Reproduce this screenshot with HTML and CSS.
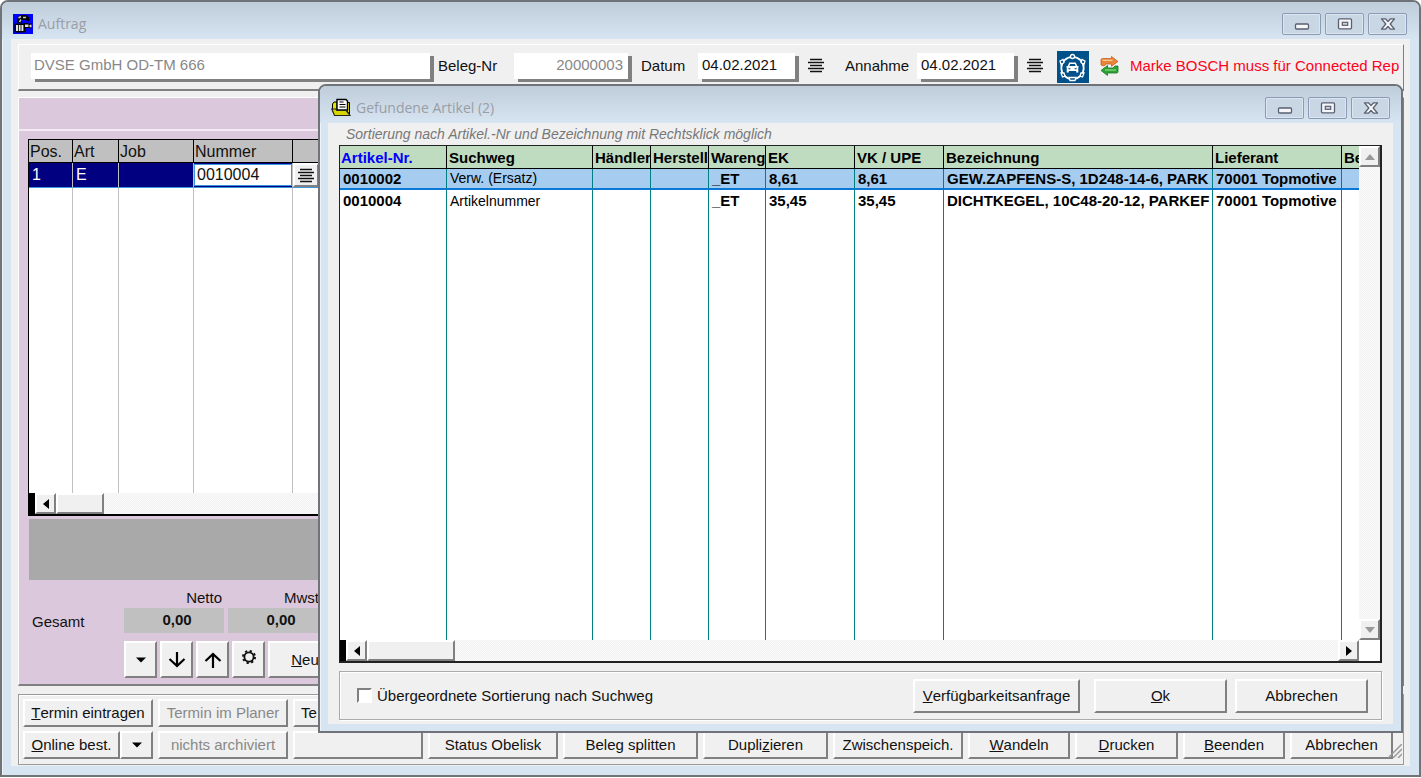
FILE: index.html
```html
<!DOCTYPE html>
<html lang="de">
<head>
<meta charset="utf-8">
<title>Auftrag</title>
<link rel="stylesheet" href="styles.css">
</head>
<body>
<svg class="defs" width="0" height="0" aria-hidden="true">
  <symbol id="lines" viewBox="0 0 16 15"><path d="M2 1.500h12M0 4.500h16M2 7.500h12M0 10.500h16M2 13.500h12" stroke="#111" stroke-width="1.600"/></symbol>
  <symbol id="min" viewBox="0 0 16 14"><rect x="1.500" y="7" width="13" height="5" rx="1" fill="#f4f6f9" stroke="#5a6070" stroke-width="1.300"/></symbol>
  <symbol id="max" viewBox="0 0 16 14"><rect x="1.500" y="1.800" width="13" height="10" rx="1" fill="#f4f6f9" stroke="#5a6070" stroke-width="1.300"/><rect x="5.300" y="5.300" width="5.400" height="3" fill="#c8d4e0" stroke="#5a6070" stroke-width="1.200"/></symbol>
  <symbol id="close" viewBox="0 0 16 14"><path d="M1.500 1.800h4L8 4.600l2.500-2.800h4L10.200 7l4.300 5.200h-4L8 9.400l-2.500 2.800h-4L5.800 7z" fill="#f4f6f9" stroke="#5a6070" stroke-width="1.300" stroke-linejoin="round"/></symbol>
  <symbol id="down" viewBox="0 0 10 6"><path d="M0 0.500h10L5 5.500z" fill="#000"/></symbol>
</svg>

<main class="window main-window">
  <header class="titlebar">
    <svg class="app-icon" viewBox="0 0 20 20" aria-hidden="true">
      <rect width="20" height="20" fill="#0000ff"/>
      <path d="M4 5.500L5.500 2.500 8 1h5l3 2 .5 3-1.500 1.500-2-1.500H9v3H4z" fill="#000"/>
      <path d="M5.500 4L8 2.500M8 5.500L6.500 8M10 3.500h3" stroke="#c8c8c8" stroke-width="1.500"/>
      <rect x="1.500" y="9.500" width="11" height="9" fill="#000"/>
      <path d="M3 11h2v6H3zM5.800 11h1.800v6H5.800zM8.400 11h2v6h-2z" fill="#e4e4e4"/>
      <path d="M11 9h4l1 1 3-1v6l-3-1h-5z" fill="#000"/>
      <path d="M12 10.500h3.500v2.500H12zM16.500 11l2-.5v3l-2-.5z" fill="#dcdcdc"/>
    </svg>
    <h1>Auftrag</h1>
    <div class="controls">
      <button type="button" aria-label="Minimieren"><svg><use href="#min"/></svg></button>
      <button type="button" aria-label="Maximieren"><svg><use href="#max"/></svg></button>
      <button type="button" aria-label="Schließen"><svg><use href="#close"/></svg></button>
    </div>
  </header>

  <div class="client">
    <section class="order-head">
      <input class="field customer muted" type="text" value="DVSE GmbH OD-TM 666" aria-label="Kunde">
      <label for="beleg">Beleg-Nr</label>
      <input class="field beleg muted" id="beleg" type="text" value="20000003">
      <label for="datum">Datum</label>
      <input class="field date" id="datum" type="text" value="04.02.2021">
      <button type="button" class="plain" aria-label="Datum wählen"><svg class="lines"><use href="#lines"/></svg></button>
      <label for="annahme">Annahme</label>
      <input class="field date" id="annahme" type="text" value="04.02.2021">
      <button type="button" class="plain" aria-label="Annahme wählen"><svg class="lines"><use href="#lines"/></svg></button>
      <button type="button" class="plain" aria-label="Fahrzeug">
        <svg class="car" viewBox="0 0 32 32">
          <rect width="32" height="32" fill="#00508a"/>
          <circle cx="15.500" cy="17" r="11.200" fill="none" stroke="#fff" stroke-width="1.800"/>
          <g fill="#00508a" stroke="#fff" stroke-width="1.300">
            <circle cx="15.500" cy="5.500" r="2"/><path d="M3 10l3-1.500 1 3-3 2zM28 10l-3-1.500-1 3 3 2zM4 22l3 0 1 3-2.500 1zM27 22l-3 0-1 3 2.500 1zM12 26.500h7l-1 3h-5z"/>
          </g>
          <path d="M9 15.500l1.700-.6 1.600-3.400h6.400l1.600 3.400 1.700.6-.8 1.200.2 4.800h-2.200V20h-7.400v1.500H9.600l.2-4.800zM13.200 12.900l-.9 2h6.400l-.9-2zM11.500 16.800v1.400h2v-.8zM19.500 16.800v1.400h-2v-.8z" fill="#fff" fill-rule="evenodd"/>
        </svg>
      </button>
      <button type="button" class="plain" aria-label="Synchronisieren">
        <svg class="sync" viewBox="0 0 19 20">
          <path d="M1 9V4q0-1.500 1.500-1.500h9V0.500l6.500 5-6.500 4.800V8H6L4 10z" fill="#e8853a" stroke="#c4601c" stroke-width=".8"/>
          <path d="M2.500 4.300h10" stroke="#f9c894" stroke-width="1.300"/>
          <path d="M18 10v5.500q0 1.500-1.500 1.500h-9v2.500L1 14.500l6.500-5V12H13l2-2z" fill="#2ea135" stroke="#167a20" stroke-width=".8"/>
          <path d="M5 14h11" stroke="#86d47c" stroke-width="1.300"/>
        </svg>
      </button>
      <p class="warning">Marke BOSCH muss für Connected Rep</p>
    </section>

    <section class="order-body">
      <div class="strip"></div>
      <div class="positions">
        <div class="list">
          <table class="pos-table">
            <colgroup><col class="c-pos"><col class="c-art"><col class="c-job"><col class="c-num"><col class="c-btn"><col></colgroup>
            <thead><tr><th>Pos.</th><th>Art</th><th>Job</th><th>Nummer</th><th></th><th></th></tr></thead>
            <tbody>
              <tr class="active"><td>1</td><td>E</td><td></td><td class="edit"><input type="text" value="0010004" aria-label="Nummer"></td><td class="pick"><button type="button" class="raised" aria-label="Artikel wählen"><svg class="lines"><use href="#lines"/></svg></button></td><td></td></tr>
              <tr class="filler"><td></td><td></td><td></td><td></td><td></td><td></td></tr>
            </tbody>
          </table>
          <div class="hscroll">
            <button type="button" class="raised" aria-label="Links"><svg class="tri-h" viewBox="0 0 6 10"><path d="M6 0v10L0 5z"/></svg></button>
            <span class="raised thumb short"></span>
          </div>
        </div>
        <div class="info"></div>
        <div class="totals">
          <span></span><span class="cap">Netto</span><span class="cap mw">Mwst</span>
          <span class="sum-label">Gesamt</span><output>0,00</output><output>0,00</output>
        </div>
        <div class="tools">
          <button type="button" class="raised" aria-label="Menü"><svg class="down"><use href="#down"/></svg></button>
          <button type="button" class="raised" aria-label="Nach unten"><svg class="arrow" viewBox="0 0 18 16"><path d="M9 0v14M1.500 7l7.500 7 7.500-7" fill="none" stroke="#000" stroke-width="2.200"/></svg></button>
          <button type="button" class="raised" aria-label="Nach oben"><svg class="arrow" viewBox="0 0 18 16"><path d="M9 16V2M1.500 9L9 2l7.500 7" fill="none" stroke="#000" stroke-width="2.200"/></svg></button>
          <button type="button" class="raised gear-button" aria-label="Einstellungen"><svg class="gear" viewBox="0 0 16 16"><circle cx="8" cy="8" r="4.600" fill="none" stroke="#111" stroke-width="1.800"/><circle cx="8" cy="8" r="6" fill="none" stroke="#111" stroke-width="2" stroke-dasharray="2.200 2.512"/></svg></button>
          <button type="button" class="raised new"><u>N</u>eu</button>
        </div>
      </div>
    </section>

    <footer class="actions">
      <button type="button" class="raised"><u>T</u>ermin eintragen</button>
      <button type="button" class="raised muted">Termin im Planer</button>
      <button type="button" class="raised start">Te</button>
      <div class="split">
        <button type="button" class="raised"><u>O</u>nline best.</button>
        <button type="button" class="raised" aria-label="Mehr"><svg class="down"><use href="#down"/></svg></button>
      </div>
      <button type="button" class="raised muted">nichts archiviert</button>
      <button type="button" class="raised" aria-label="Leer"></button>
      <button type="button" class="raised">Status Obelisk</button>
      <button type="button" class="raised">Beleg splitten</button>
      <button type="button" class="raised">Dupli<u>z</u>ieren</button>
      <button type="button" class="raised">Zwischenspeich.</button>
      <button type="button" class="raised"><u>W</u>andeln</button>
      <button type="button" class="raised"><u>D</u>rucken</button>
      <button type="button" class="raised"><u>B</u>eenden</button>
      <button type="button" class="raised">Abbrechen</button>
      <svg class="grip" viewBox="0 0 14 14" aria-hidden="true"><path d="M0 14L14 0M5 14l9-9M10 14l4-4" stroke="#999" stroke-width="1.500"/></svg>
    </footer>
  </div>
</main>

<section class="window dialog" role="dialog" aria-labelledby="dialog-title">
  <header class="titlebar">
    <svg class="app-icon" viewBox="0 0 20 20" aria-hidden="true">
      <path d="M1.500 13V6l1.500-2h3v9z" fill="#e4e400" stroke="#000"/>
      <path d="M16 4.500h2.500V16L16 13z" fill="#e4e400" stroke="#000"/>
      <path d="M6 12V1.500h9L16.500 3v9z" fill="#fff" stroke="#000" stroke-width="1.400"/>
      <path d="M8.500 4h4M8.500 6.500h6M8.500 9h6" stroke="#000" stroke-width="1.200"/>
      <path d="M0.800 11h4l1 1.500H15l4 5H3.500z" fill="#d6d600" stroke="#222" stroke-width="1.200"/>
    </svg>
    <h2 id="dialog-title">Gefundene Artikel (2)</h2>
    <div class="controls">
      <button type="button" aria-label="Minimieren"><svg><use href="#min"/></svg></button>
      <button type="button" aria-label="Maximieren"><svg><use href="#max"/></svg></button>
      <button type="button" aria-label="Schließen"><svg><use href="#close"/></svg></button>
    </div>
  </header>
  <div class="dialog-client">
    <p class="hint">Sortierung nach Artikel.-Nr und Bezeichnung mit Rechtsklick möglich</p>
    <div class="results">
      <table class="result-table">
        <colgroup><col class="r-nr"><col class="r-weg"><col class="r-s"><col class="r-s"><col class="r-m"><col class="r-ek"><col class="r-vk"><col><col class="r-lief"><col class="r-end"></colgroup>
        <thead><tr><th class="sorted">Artikel-Nr.</th><th>Suchweg</th><th>Händler</th><th>Herstell</th><th>Wareng</th><th>EK</th><th>VK / UPE</th><th>Bezeichnung</th><th>Lieferant</th><th>Be</th></tr></thead>
        <tbody>
          <tr class="selected"><td>0010002</td><td class="way">Verw. (Ersatz)</td><td></td><td></td><td>_ET</td><td>8,61</td><td>8,61</td><td>GEW.ZAPFENS-S, 1D248-14-6, PARK</td><td>70001 Topmotive</td><td></td></tr>
          <tr><td>0010004</td><td class="way">Artikelnummer</td><td></td><td></td><td>_ET</td><td>35,45</td><td>35,45</td><td>DICHTKEGEL, 10C48-20-12, PARKEF</td><td>70001 Topmotive</td><td></td></tr>
          <tr class="filler"><td></td><td></td><td></td><td></td><td></td><td></td><td></td><td></td><td></td><td></td></tr>
        </tbody>
      </table>
      <div class="vscroll">
        <button type="button" class="raised" aria-label="Hoch"><svg class="tri-v" viewBox="0 0 10 6"><path d="M0 6h10L5 0z"/></svg></button>
        <button type="button" class="raised" aria-label="Runter"><svg class="tri-v" viewBox="0 0 10 6"><path d="M0 0h10L5 6z"/></svg></button>
      </div>
      <div class="hscroll">
        <button type="button" class="raised" aria-label="Links"><svg class="tri-h" viewBox="0 0 6 10"><path d="M6 0v10L0 5z"/></svg></button>
        <span class="raised thumb"></span>
        <button type="button" class="raised last" aria-label="Rechts"><svg class="tri-h" viewBox="0 0 6 10"><path d="M0 0v10l6-5z"/></svg></button>
      </div>
    </div>
    <div class="dialog-actions">
      <label class="check"><input type="checkbox">Übergeordnete Sortierung nach Suchweg</label>
      <button type="button" class="raised query"><u>V</u>erfügbarkeitsanfrage</button>
      <button type="button" class="raised"><u>O</u>k</button>
      <button type="button" class="raised">Abbrechen</button>
    </div>
  </div>
</section>
</body>
</html>
```

FILE: styles.css
```css
* { box-sizing: border-box; }

body {
  margin: 0;
  height: 100vh;
  position: relative;
  overflow: hidden;
  background: #fff;
  color: #111;
  font: 15px/20px "Liberation Sans", Arial, sans-serif;
}

button, input { font: inherit; color: inherit; margin: 0; }
h1, h2, p { margin: 0; }
.defs { position: absolute; }
svg { display: block; }

.window {
  display: flex;
  flex-direction: column;
  border: 2px solid #707478;
  border-radius: 8px 8px 0 0;
  background: #d7e4f2;
  box-shadow: inset 1px 1px 0 #edf3f9;
}

.main-window { height: calc(100vh - 1px); }

.dialog {
  position: absolute;
  left: 318px;
  top: 84px;
  right: 18px;
  bottom: 45px;
}

.titlebar {
  display: flex;
  align-items: center;
  flex: none;
  height: 37px;
  padding: 7px 12px 0 11px;
  border-radius: 6px 6px 0 0;
  background: linear-gradient(#bfccda, #d7e4f2);
}
.dialog .titlebar { padding-right: 11px; }

.titlebar h1, .titlebar h2 {
  flex: 1;
  padding-left: 5px;
  font: 14px/20px "Open Sans", "Noto Sans", sans-serif;
  color: #9a9ea4;
}

.app-icon { width: 20px; height: 20px; }

.controls { display: flex; gap: 4px; }
.controls button {
  display: grid;
  place-items: center;
  width: 39px;
  height: 22px;
  padding: 0;
  border: 1px solid #8c9bb5;
  border-radius: 2px;
  background: #c9d6e4;
  box-shadow: inset 0 0 0 1px #dce6f0;
}
.controls svg { width: 16px; height: 14px; }

.client {
  flex: 1;
  min-height: 0;
  display: flex;
  flex-direction: column;
  margin: 0 9px 9px;
  padding: 5px 6px 1px 7px;
  background: #f0f0f0;
}

.muted { color: #888; }

.raised {
  display: flex;
  align-items: center;
  justify-content: center;
  min-width: 0;
  padding: 0;
  border: 2px solid;
  border-color: #fff #808080 #808080 #fff;
  border-radius: 0;
  background: #f0f0f0;
  white-space: nowrap;
}

.plain { padding: 0; border: 0; background: none; justify-self: start; }
.lines { width: 16px; height: 15px; }
.down { width: 10px; height: 6px; }
.tri-h { width: 6px; height: 10px; }
.tri-v { width: 10px; height: 6px; fill: #999; }

.order-head {
  flex: none;
  display: grid;
  grid-template-columns: 407px 76px 127px 57px 110px 37px 72px 110px 30px 43px 30px minmax(0, 1fr);
  align-items: center;
  height: 47px;
  padding: 0 0 3px 12px;
  border: 1px solid;
  border-color: #fff #808080 #808080 #fff;
  border-bottom-width: 2px;
}

.field {
  height: 26px;
  padding: 0 5px 2px 3px;
  border: 0;
  background: #fff;
  box-shadow: 4px 3px 0 #808080;
}
.customer { width: 399px; }
.beleg { width: 114px; text-align: right; }
.date { width: 97px; padding-left: 4px; }
.car { width: 32px; height: 32px; margin-top: 3px; }
.sync { width: 19px; height: 20px; }
.warning { overflow: hidden; white-space: nowrap; color: #ff0018; }

.order-body {
  flex: 1;
  min-height: 0;
  display: flex;
  flex-direction: column;
  margin-top: 6px;
  border: 1px solid;
  border-color: #fff #808080 #808080 #fff;
  border-bottom-width: 2px;
  background: #dcc8dc;
}
.strip { flex: none; height: 33px; border-bottom: 2px solid #f3eaf3; }

.positions {
  flex: 1;
  min-height: 0;
  display: flex;
  flex-direction: column;
  padding: 8px 10px 6px 9px;
}

.list {
  flex: 1;
  min-height: 0;
  display: flex;
  flex-direction: column;
  border: 1px solid #000;
  border-bottom-width: 2px;
  background: #fff;
}

table { border-collapse: separate; border-spacing: 0; table-layout: fixed; width: 100%; }
th, td {
  padding: 0 0 0 3px;
  overflow: hidden;
  white-space: nowrap;
  text-align: left;
}

.pos-table { flex: 1; min-height: 0; font-size: 16px; }
.c-pos { width: 44px; }
.c-art { width: 46px; }
.c-job { width: 75px; }
.c-num { width: 99px; }
.c-btn { width: 27px; }
.pos-table th {
  height: 22px;
  padding: 2px 0 0 1px;
  border-right: 1px solid #000;
  border-bottom: 1px solid #000;
  background: #c0c0c0;
  font-weight: normal;
}
.pos-table td { border-right: 1px solid #c0c0c0; }
.active td { height: 25px; border-bottom: 1px solid #3c96dc; background: #000080; color: #fff; }
.active .edit { padding: 0; }
.edit input {
  display: block;
  width: 100%;
  height: 22px;
  padding: 0 0 0 2px;
  border: 1px solid #3c96dc;
  background: #fff;
  color: #111;
}
.active .pick { padding: 0; background: #fff; }
.pick .raised { width: 100%; height: 24px; }

.hscroll {
  flex: none;
  display: flex;
  height: 21px;
  border-left: 6px solid #000;
  background: repeating-conic-gradient(#f1f1f1 0 25%, #fbfbfb 0 50%) 0 0 / 2px 2px;
}
.hscroll button { width: 21px; }
.thumb { width: 88px; }
.thumb.short { width: 48px; }
.hscroll .last { margin-left: auto; }

.info { flex: none; height: 61px; margin: 3px 0 0 1px; background: #a9a9a9; }

.totals {
  flex: none;
  display: grid;
  grid-template-columns: 92px 100px 100px;
  grid-template-rows: 20px 25px;
  column-gap: 4px;
  margin-top: 8px;
}
.cap { padding-right: 2px; text-align: right; }
.cap.mw { padding: 0 0 0 56px; text-align: left; }
.sum-label { padding: 4px 0 0 4px; }
.totals output {
  padding-left: 6px;
  background: #c0c0c0;
  font-weight: bold;
  line-height: 24px;
  text-align: center;
}

.tools { flex: none; display: flex; gap: 3px; height: 37px; margin: 8px 0 0 96px; }
.tools button { width: 33px; }
.arrow { width: 18px; height: 16px; }
.gear { width: 16px; height: 16px; }
.tools .gear-button { padding-bottom: 6px; }
.tools .new { width: 74px; }

.actions {
  flex: none;
  position: relative;
  display: grid;
  grid-template-columns: 130fr 130fr 130fr 130fr 135fr 125fr 130fr 102fr 103fr 102fr 103fr;
  grid-template-rows: 28px 28px;
  gap: 4px 5px;
  height: 71px;
  margin-top: 8px;
  padding: 4px 10px 0 4px;
  border: 1px solid #999;
  box-shadow: inset 1px 1px 0 #fff;
}
.split { grid-column: 1; display: grid; grid-template-columns: 97fr 33fr; min-width: 0; }
.start { justify-content: flex-start; padding-left: 6px; }
.grip { position: absolute; right: 1px; bottom: 6px; width: 14px; height: 14px; }

.dialog-client {
  flex: 1;
  min-height: 0;
  display: flex;
  flex-direction: column;
  margin: 0 8px 7px;
  padding: 1px 11px 4px;
  background: #f0f0f0;
}
.hint { flex: none; padding-left: 7px; font-size: 14px; line-height: 21px; font-style: italic; color: #777; }

.results {
  flex: 1;
  min-height: 0;
  display: grid;
  grid-template-columns: minmax(0, 1fr) 21px;
  grid-template-rows: minmax(0, 1fr) 21px;
  border: 1px solid #222;
  border-bottom-width: 2px;
  border-right-width: 2px;
  background: #fff;
}
.result-table { height: 100%; color: #000; font-weight: bold; }
.r-nr { width: 107px; }
.r-weg { width: 146px; }
.r-s { width: 58px; }
.r-m { width: 57px; }
.r-ek { width: 89px; }
.r-vk { width: 89px; }
.r-lief { width: 129px; }
.r-end { width: 17px; }
.result-table th {
  height: 21px;
  padding: 2px 0 0 2px;
  border-right: 1px solid #000;
  border-bottom: 1px solid #000;
  background: #c0dcc0;
}
.result-table td { height: 21px; border-right: 1px solid #008080; }
.result-table .sorted { padding-left: 1px; color: #0000ff; }
.result-table td:last-child, .result-table th:last-child { border-right: 0; }
.result-table .way { font-size: 14px; font-weight: normal; }
.selected td { line-height: 19px; border-bottom: 2px solid #0a78d7; background: #a6cdf0; }
.result-table .filler td, .pos-table .filler td { height: auto; }

.vscroll {
  display: flex;
  flex-direction: column;
  justify-content: space-between;
  background: repeating-conic-gradient(#f1f1f1 0 25%, #fbfbfb 0 50%) 0 0 / 2px 2px;
}
.vscroll button { height: 21px; }

.dialog-actions {
  flex: none;
  display: flex;
  align-items: center;
  gap: 8px;
  height: 49px;
  margin-top: 8px;
  padding: 0 13px 0 17px;
  border: 1px solid #aaa;
  box-shadow: inset 1px 1px 0 #fff, 1px 1px 0 #fff;
}
.dialog-actions button { width: 133px; height: 34px; }
.dialog-actions .query { width: 167px; margin-right: 6px; }
.check { flex: 1; display: flex; align-items: center; gap: 5px; }
.check input {
  appearance: none;
  width: 15px;
  height: 15px;
  border: 2px solid;
  border-color: #808080 #fff #fff #808080;
  background: #fff;
}
```
